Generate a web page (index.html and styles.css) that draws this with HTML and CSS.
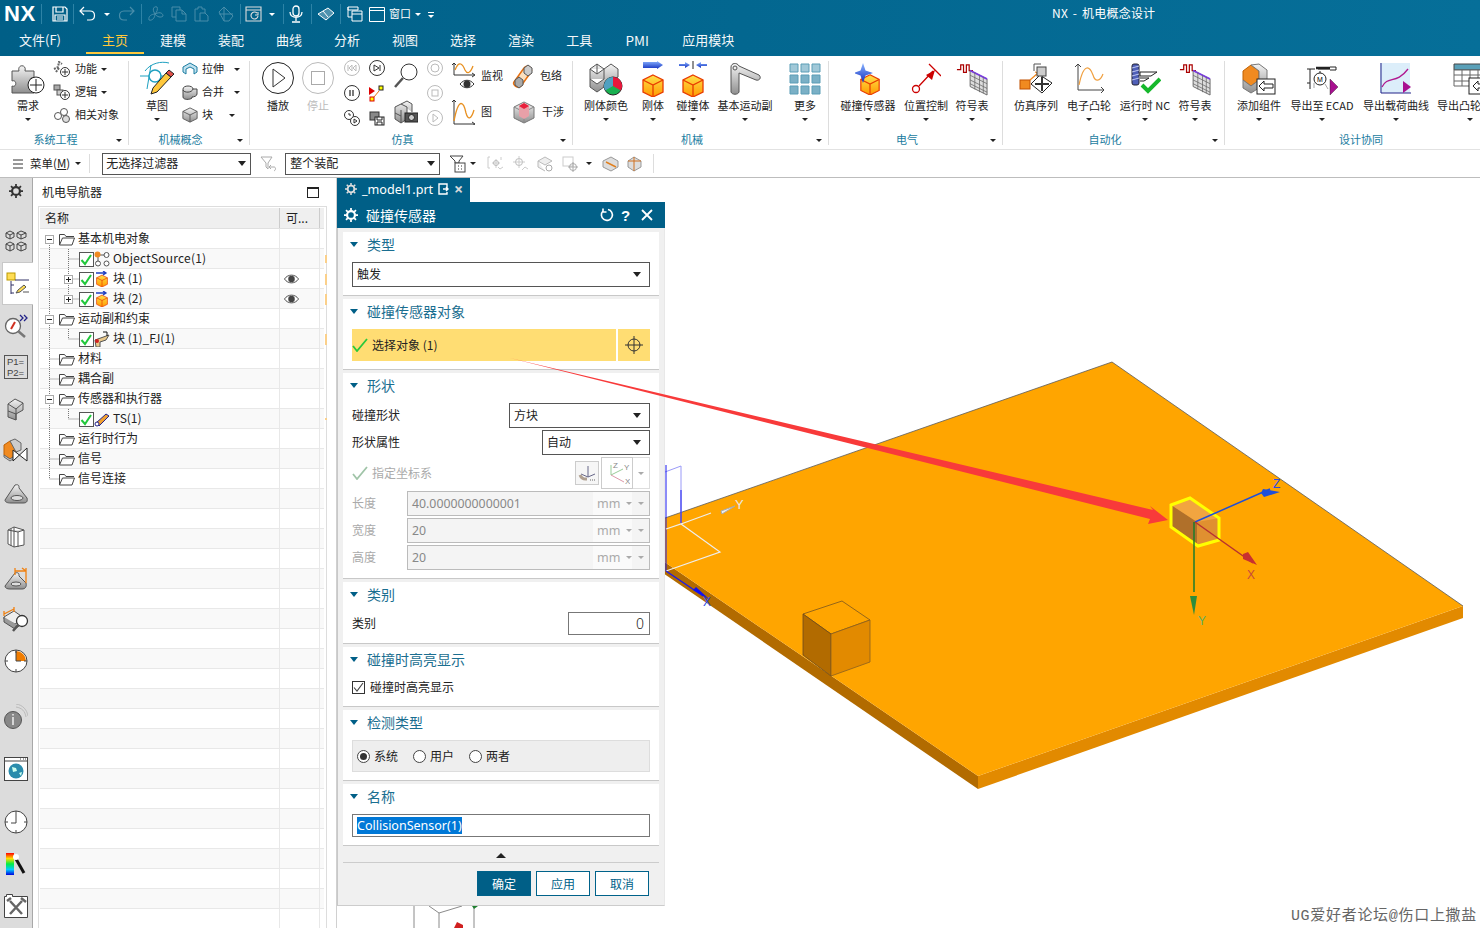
FILE: index.html
```html
<!DOCTYPE html>
<html lang="zh">
<head>
<meta charset="utf-8">
<title>NX - 机电概念设计</title>
<link rel="stylesheet" href="styles.css">
</head>
<body>
<svg class="defs" width="0" height="0" aria-hidden="true">
  <defs>
    <linearGradient id="sil" x1="0" y1="0" x2="0" y2="1"><stop offset="0" stop-color="#f4f4f4"/><stop offset="1" stop-color="#8f8f8f"/></linearGradient>
    <linearGradient id="gold" x1="0" y1="0" x2="0" y2="1"><stop offset="0" stop-color="#ffe04a"/><stop offset="1" stop-color="#ff9a00"/></linearGradient>
    <linearGradient id="blu" x1="0" y1="0" x2="0" y2="1"><stop offset="0" stop-color="#8ab4ff"/><stop offset="1" stop-color="#1230c0"/></linearGradient>
    <linearGradient id="rain" x1="0" y1="0" x2="0" y2="1"><stop offset="0" stop-color="#f00"/><stop offset=".25" stop-color="#fd0"/><stop offset=".5" stop-color="#0e4"/><stop offset=".75" stop-color="#0cf"/><stop offset="1" stop-color="#00d"/></linearGradient>
    <symbol id="folder" viewBox="0 0 16 14"><path d="M.5 13V2.500h5l1.500 2H15M.5 13h12.500l2.500-7H3.500L.5 13" fill="#fff" stroke="#444"/></symbol>
    <symbol id="chk" viewBox="0 0 15 15"><rect x=".5" y=".5" width="14" height="14" fill="#fff" stroke="#555"/><path d="M2.500 8l3.500 4 6-9" fill="none" stroke="#22c83c" stroke-width="2"/></symbol>
    <symbol id="cube" viewBox="0 0 22 24"><path d="M11 2l10 5v12l-10 5-10-5V7z" fill="url(#gold)" stroke="#e83c00" stroke-width="1.300"/><path d="M1 7l10 5 10-5M11 12v12" fill="none" stroke="#e83c00" stroke-width="1.300"/></symbol>
    <symbol id="silcube" viewBox="0 0 18 18"><path d="M9 1l8 4v8l-8 4-8-4V5z" fill="url(#sil)" stroke="#555"/><path d="M1 5l8 4 8-4M9 9v8" fill="none" stroke="#555"/></symbol>
    <symbol id="table" viewBox="0 0 34 34"><path d="M1 7h4V2h3v8h3V2h3v6h4" fill="none" stroke="#a00" stroke-width="1.300"/><path d="M15 8l18 9v17l-18-9z" fill="#ddd" stroke="#666"/><path d="M15 8l18 9" stroke="#7a3ce0" stroke-width="2"/><path d="M15 13l18 9M15 18l18 9M15 22l18 9M20 10v18M25 13v18M29 15v17" stroke="#666" stroke-width=".8"/></symbol>
    <symbol id="eye" viewBox="0 0 16 12"><path d="M.5 6C4 .5 12 .5 15.500 6 12 11.500 4 11.500.5 6z" fill="#fff" stroke="#444"/><circle cx="8" cy="6" r="3.500" fill="#444"/></symbol>
    <symbol id="gear" viewBox="0 0 16 16"><circle cx="8" cy="8" r="4.500" fill="none" stroke="currentColor" stroke-width="2.500"/><path d="M8 0v3M8 13v3M0 8h3M13 8h3M2.300 2.300l2 2M11.700 11.700l2 2M13.700 2.300l-2 2M4.300 11.700l-2 2" stroke="currentColor" stroke-width="2"/></symbol>
  </defs>
</svg>

<header class="topbar">
  <div class="quick">
    <strong class="logo">NX</strong><i class="qsep"></i>
    <svg class="q ml10" width="16" height="16" viewBox="0 0 16 16"><path d="M1 1h12l2 2v12H1zM4 1v5h7V1M3 15V9h10v6M5 11h6M5 13h6" fill="none" stroke="#fff" stroke-width="1.200"/></svg><i class="qsep ml5"></i>
    <svg class="q ml5" width="18" height="16" viewBox="0 0 18 16"><path d="M5 1L1 5l4 4M1 5h10c6 0 6 9 0 9H8" fill="none" stroke="#fff" stroke-width="1.200"/></svg><i class="caret w ml7"></i>
    <svg class="q dim ml7" width="18" height="16" viewBox="0 0 18 16"><path d="M13 1l4 4-4 4M17 5H7c-6 0-6 9 0 9h3" fill="none" stroke="#fff" stroke-width="1.200"/></svg><i class="qsep ml6"></i>
    <svg class="q dim ml5" width="17" height="16" viewBox="0 0 17 16"><path d="M8 8C4 2 8 0 10 1c1 2 0 5-2 7zm0 0c6-3 8 0 8 2-2 2-6 1-8-2zm0 0c-3 0-7 2-6 6 3 1 6-2 6-6z" fill="none" stroke="#fff"/></svg>
    <svg class="q dim ml7" width="16" height="16" viewBox="0 0 16 16"><path d="M1 1h8v3M1 1v10h4M5 4h6l4 4v7H5zM11 4v4h4" fill="none" stroke="#fff"/></svg>
    <svg class="q dim ml6" width="16" height="16" viewBox="0 0 16 16"><path d="M2 3h3V1h4v2h3v4M7 15H2V3M7 7h5l3 3v5H7z" fill="none" stroke="#fff"/></svg>
    <svg class="q dim ml7" width="18" height="16" viewBox="0 0 18 16"><path d="M3 6l5-5 9 9-4 5H8z M8 1v14M3 8l14 0" fill="none" stroke="#fff"/></svg><i class="qsep ml6"></i>
    <svg class="q warm ml4" width="17" height="16" viewBox="0 0 17 16"><path d="M1 1h15v14H1zM1 4h15M12 7a3.500 3.500 0 1 0 1 3M13 6v3h-3" fill="none" stroke="#ddd" stroke-width="1.100"/></svg><i class="caret w ml7"></i><i class="qsep ml8"></i>
    <svg class="q ml5" width="14" height="18" viewBox="0 0 14 18"><rect x="4" y="1" width="6" height="10" rx="3" fill="none" stroke="#fff" stroke-width="1.300"/><path d="M1 7c0 7 12 7 12 0M7 13v3M3 17h8" fill="none" stroke="#fff" stroke-width="1.300"/></svg><i class="qsep ml8"></i>
    <svg class="q ml5" width="18" height="14" viewBox="0 0 18 14"><path d="M1 7l10-6 6 5-8 7zM6 4l5 6" fill="#fff" fill-opacity=".3" stroke="#fff"/></svg><i class="qsep ml5"></i>
    <svg class="q ml6" width="16" height="16" viewBox="0 0 16 16"><path d="M1 1h10v3H1zM1 1v10h4M5 5h10v10H5zM5 8h10" fill="none" stroke="#fff"/></svg>
    <svg class="q ml6" width="16" height="15" viewBox="0 0 16 15"><path d="M.5.500h15v14H.5zM.5 3.500h15" fill="none" stroke="#fff"/></svg>
    <span class="qtext ml4">窗口</span><i class="caret w ml4"></i><i class="qmenu ml7"></i>
    <span class="apptitle">NX - 机电概念设计</span>
  </div>
  <nav class="tabs">
    <a class="tab file">文件(F)</a><a class="tab on">主页</a><a class="tab">建模</a><a class="tab">装配</a><a class="tab">曲线</a><a class="tab">分析</a><a class="tab">视图</a><a class="tab">选择</a><a class="tab">渲染</a><a class="tab">工具</a><a class="tab pmi">PMI</a><a class="tab">应用模块</a>
  </nav>
</header>

<section class="ribbon">
  <div class="group g1">
    <div class="items">
      <div class="big"><svg width="34" height="36" viewBox="0 0 34 36"><path d="M1 10h7C6 3 16 3 14 10h9v7c-6-2-6 8 0 6v9H1v-7c5 2 5-7 0-5z" fill="url(#sil)" stroke="#555"/><circle cx="25" cy="24" r="8" fill="#fff" stroke="#222"/><path d="M25 18v12M19 24h12" stroke="#222"/></svg><span>需求</span><i class="caret"></i></div>
      <div class="col">
        <div class="sm"><svg width="18" height="16" viewBox="0 0 18 16"><path d="M1 8l4-2 1-5 3 2M3 11l3-4" stroke="#666" fill="none" stroke-width="2" stroke-dasharray="2 1"/><circle cx="12" cy="11" r="4.500" fill="#fff" stroke="#333"/><path d="M12 8v6M9 11h6" stroke="#333"/></svg><span>功能</span><i class="caret"></i></div>
        <div class="sm"><svg width="18" height="16" viewBox="0 0 18 16"><rect x="1" y="1" width="6" height="5" fill="#aaa" stroke="#555"/><rect x="4" y="6" width="6" height="5" fill="#ccc" stroke="#555"/><circle cx="12" cy="11" r="4.500" fill="#fff" stroke="#333"/><path d="M12 8v6M9 11h6" stroke="#333"/></svg><span>逻辑</span><i class="caret"></i></div>
        <div class="sm"><svg width="18" height="16" viewBox="0 0 18 16"><circle cx="5" cy="9" r="3.500" fill="#fff" stroke="#555"/><circle cx="11" cy="5" r="3.500" fill="#fff" stroke="#555"/><circle cx="13" cy="12" r="3.500" fill="#ddd" stroke="#555"/></svg><span>相关对象</span></div>
      </div>
    </div>
    <div class="glabel"><span>系统工程</span><i class="caret"></i></div>
  </div>

  <div class="group g2">
    <div class="items">
      <div class="big"><svg width="36" height="36" viewBox="0 0 36 36"><path d="M1 15h24M8 28L12 4M6 10C12 2 22 0 30 2" fill="none" stroke="#1ea0c0"/><circle cx="16" cy="15" r="6" fill="#fff" stroke="#1ea0c0" stroke-width="1.500"/><path d="M12 33l2-6L27 12l5 4L18 31z" fill="#ffc83c" stroke="#222"/><path d="M27 12l3-3 5 4-3 3z" fill="#e0504a" stroke="#222"/></svg><span>草图</span><i class="caret"></i></div>
      <div class="col">
        <div class="sm"><svg width="16" height="14" viewBox="0 0 16 14"><path d="M1 5l7-4 7 4v5l-3 2V7L8 5 4 7v5l-3-2z" fill="#bfe2f0" stroke="#1c7ca0"/></svg><span>拉伸</span><i class="caret sp"></i></div>
        <div class="sm"><svg width="16" height="15" viewBox="0 0 16 15"><path d="M1 4c0-4 10-4 10 0h4v5c0 2-3 3-5 3v1c-2 2-9 2-9-1z" fill="url(#sil)" stroke="#444"/><path d="M1 5c1 3 9 3 10-1" fill="none" stroke="#444"/></svg><span>合并</span><i class="caret sp"></i></div>
        <div class="sm"><svg width="16" height="16"><use href="#silcube"/></svg><span>块</span><i class="caret sp2"></i></div>
      </div>
    </div>
    <div class="glabel"><span>机械概念</span><i class="caret"></i></div>
  </div>

  <div class="group g3">
    <div class="items">
      <div class="big"><svg width="32" height="36" viewBox="0 0 32 36"><circle cx="16" cy="17" r="15.500" fill="#fff" stroke="#222"/><path d="M11 8l12 9-12 9z" fill="#fff" stroke="#333"/></svg><span>播放</span></div>
      <div class="big off"><svg width="32" height="36" viewBox="0 0 32 36"><circle cx="16" cy="17" r="15.500" fill="#fff" stroke="#bbb"/><rect x="9.500" y="10.500" width="13" height="13" fill="none" stroke="#aaa"/></svg><span>停止</span></div>
      <div class="col">
        <svg width="16" height="16" viewBox="0 0 16 16"><circle cx="8" cy="8" r="7.500" fill="#fff" stroke="#bbb"/><path d="M4 5v6M8 5L5 8l3 3zM12 5L9 8l3 3z" fill="none" stroke="#bbb"/></svg>
        <svg width="16" height="16" viewBox="0 0 16 16"><circle cx="8" cy="8" r="7.500" fill="#fff" stroke="#333"/><path d="M6 5v6M9 5v6" stroke="#333" stroke-width="1.300"/></svg>
        <svg width="16" height="16" viewBox="0 0 16 16"><circle cx="5" cy="5" r="4.500" fill="#fff" stroke="#333"/><circle cx="11" cy="11" r="4.500" fill="#fff" stroke="#333"/><path d="M5 3v2h2M10 9l3 2-3 2z" fill="none" stroke="#333"/></svg>
      </div>
      <div class="col">
        <svg width="16" height="16" viewBox="0 0 16 16"><circle cx="8" cy="8" r="7.500" fill="#fff" stroke="#333"/><path d="M5 5l5 3-5 3zM11 5v6" fill="none" stroke="#333"/></svg>
        <svg width="16" height="17" viewBox="0 0 16 17"><path d="M0 2l6 4-6 4z" fill="#d00"/><rect x="10" y="1" width="4" height="4" fill="#ff0" stroke="#222"/><rect x="1" y="12" width="4" height="4" fill="#ff0" stroke="#d00"/><path d="M5 12l5-6" stroke="#e87010"/></svg>
        <svg width="16" height="16" viewBox="0 0 16 16"><rect x="1" y="2" width="9" height="8" fill="#888" stroke="#333"/><rect x="6" y="7" width="9" height="8" fill="#fff" stroke="#222"/><path d="M8 7v3h5V7M8 15v-3h5v3" fill="none" stroke="#222"/></svg>
      </div>
      <div class="col wide">
        <svg width="24" height="26" viewBox="0 0 24 26"><circle cx="15" cy="9" r="8" fill="#fff" stroke="#333"/><path d="M9 15L1 24" stroke="#555" stroke-width="2.500"/></svg>
        <svg width="24" height="26" viewBox="0 0 24 26"><path d="M1 8l6-3 6 3v12l-6 4-6-4zM7 5l6-3 5 3v8M1 14l6 3M7 24V11" fill="url(#sil)" stroke="#555"/><rect x="11" y="14" width="13" height="9" fill="#555" stroke="#222"/><circle cx="17.500" cy="18.500" r="3" fill="#ccc" stroke="#222"/></svg>
      </div>
      <div class="col">
        <svg width="16" height="16" viewBox="0 0 16 16"><circle cx="8" cy="8" r="7.500" fill="#fff" stroke="#bbb"/><circle cx="8" cy="8" r="4" fill="none" stroke="#bbb"/></svg>
        <svg width="16" height="16" viewBox="0 0 16 16"><circle cx="8" cy="8" r="7.500" fill="#fff" stroke="#bbb"/><rect x="5" y="5" width="6" height="6" fill="none" stroke="#bbb"/></svg>
        <svg width="16" height="16" viewBox="0 0 16 16"><circle cx="8" cy="8" r="7.500" fill="#fff" stroke="#bbb"/><path d="M6 4l5 4-5 4z" fill="none" stroke="#bbb"/></svg>
      </div>
      <div class="col2">
        <div class="sm2"><svg width="24" height="28" viewBox="0 0 24 28"><path d="M2 13V1M0 3l2-2 2 2M2 13h20M20 11l3 2-3 2" fill="none" stroke="#333"/><path d="M3 8c4-11 8-5 10 0 2 4 5 4 8-4" fill="none" stroke="#e89020" stroke-width="1.300"/><path d="M8 22c4-5 10-5 14 0-4 5-10 5-14 0z" fill="#fff" stroke="#333"/><circle cx="15" cy="22" r="3.500" fill="#333"/></svg><span>监视</span></div>
        <div class="sm2"><svg width="24" height="26" viewBox="0 0 24 26"><path d="M2 25V1M0 3l2-2 2 2M2 25h20M20 23l3 2-3 2" fill="none" stroke="#333"/><path d="M2 22C7-4 12 4 14 14c2 7 5 7 8-3" fill="none" stroke="#e89020" stroke-width="1.300"/></svg><span>图</span></div>
      </div>
      <div class="col2">
        <div class="sm2"><svg width="22" height="26" viewBox="0 0 22 26"><path d="M2 19L12 5c3-4 9 0 7 4L9 23c-3 3-9-1-7-4z" fill="#fbe0c0" stroke="#e87010" stroke-width="1.500"/><path d="M3 17l4-3 4 3v5l-4 3-4-3z" fill="#aaa" stroke="#555"/><path d="M12 5l4-3 4 3v5l-4 3-4-3z" fill="#ccc" stroke="#555"/></svg><span>包络</span></div>
        <div class="sm2"><svg width="24" height="24" viewBox="0 0 24 24"><path d="M2 7l10-5 10 5v11l-10 5-10-5z" fill="url(#sil)" stroke="#777"/><path d="M2 7l10 5 10-5M12 12v11" fill="none" stroke="#888"/><path d="M7 6l5-3 5 3v10l-5 3-5-3z" fill="#e8a0a8"/><path d="M7 6l5-3 5 3-5 3z" fill="#e8203c"/></svg><span>干涉</span></div>
      </div>
    </div>
    <div class="glabel"><span>仿真</span><i class="caret"></i></div>
  </div>

  <div class="group g4">
    <div class="items">
      <div class="big"><svg width="34" height="36" viewBox="0 0 34 36"><path d="M1 8l7-5 7 5 7-5 7 5v8l-7 5-7 5-7 5-7-5zM8 13V3M15 18V8M1 8l7 5 7-5M1 18l7 5 7-5" fill="url(#sil)" stroke="#555"/><circle cx="24" cy="25" r="9" fill="#18b050" stroke="#222"/><path d="M24 25v-9a9 9 0 0 1 7.800 13.500z" fill="#e8183c"/><path d="M24 25v-9a9 9 0 0 0-7.800 13.500z" fill="#50a0c0"/></svg><span>刚体颜色</span><i class="caret"></i></div>
      <div class="big"><svg width="22" height="36" viewBox="0 0 22 36"><path d="M1 1h14V0l6 4-6 4V7H1z" fill="url(#blu)"/><use href="#cube" y="12" width="22" height="24"/></svg><span>刚体</span><i class="caret"></i></div>
      <div class="big"><svg width="28" height="36" viewBox="0 0 28 36"><path d="M0 3h6V1l5 3-5 3V5H0zM28 3h-6V1l-5 3 5 3V5h6z" fill="url(#blu)"/><path d="M14 0v8" stroke="#222"/><use href="#cube" x="3" y="12" width="22" height="24"/></svg><span>碰撞体</span><i class="caret"></i></div>
      <div class="big"><svg width="32" height="32" viewBox="0 0 32 32"><path d="M2 4c0-4 6-5 8-1l20 9c3 3 0 6-3 5L10 10v19c-1 3-7 3-8 0z" fill="url(#sil)" stroke="#555"/><circle cx="6" cy="5" r="2" fill="#eee" stroke="#555"/></svg><span>基本运动副</span><i class="caret"></i></div>
      <div class="big"><svg class="more" width="32" height="32" viewBox="0 0 32 32"><path d="M1 1h8v8H1zM12 1h8v8h-8zM23 1h8v8h-8z" fill="#a0c8d8" stroke="#5b9db6"/><path d="M1 12h8v8H1zM12 12h8v8h-8zM23 12h8v8h-8zM1 23h8v8H1zM12 23h8v8h-8zM23 23h8v8h-8z" fill="#7ab0c6" stroke="#5b9db6"/></svg><span>更多</span><i class="caret"></i></div>
    </div>
    <div class="glabel"><span class="teal">机械</span><i class="caret"></i></div>
  </div>

  <div class="group g5">
    <div class="items">
      <div class="big"><svg width="26" height="32" viewBox="0 0 26 32"><use href="#cube" x="4" y="10" width="22" height="22"/><path d="M8 0l2.500 7.500L18 10l-7.500 2.500L8 20l-2.500-7.500L-1 10l6.500-2.500z" fill="url(#blu)"/></svg><span>碰撞传感器</span><i class="caret"></i></div>
      <div class="big"><svg width="30" height="32" viewBox="0 0 30 32"><circle cx="5" cy="26" r="3.500" fill="#fff" stroke="#c00" stroke-width="1.300"/><path d="M8 23L22 8M18 1l12 12" stroke="#c00" stroke-width="1.300"/><path d="M24 7l-3 10-6-5z" fill="#c00"/></svg><span>位置控制</span><i class="caret"></i></div>
      <div class="big"><svg width="32" height="32"><use href="#table"/></svg><span>符号表</span><i class="caret"></i></div>
    </div>
    <div class="glabel"><span class="teal">电气</span><i class="caret"></i></div>
  </div>

  <div class="group g6">
    <div class="items">
      <div class="big"><svg width="34" height="32" viewBox="0 0 34 32"><rect x="1" y="17" width="10" height="9" fill="#f08a20" stroke="#c05000"/><path d="M11 17l8-7M16 9l3 1v3" fill="none" stroke="#f08a20" stroke-width="1.300"/><path d="M21 12l12 8-10 10-11-9z" fill="#fff" stroke="#222"/><path d="M23 14v14M16 21h14" stroke="#333" stroke-width="2"/><rect x="18" y="4" width="9" height="9" fill="#ccc" stroke="#444"/><path d="M15 8V1h7" fill="none" stroke="#555"/></svg><span>仿真序列</span></div>
      <div class="big"><svg width="32" height="32" viewBox="0 0 32 32"><path d="M5 27V1M2 4l3-3 3 3M5 27h26M28 24l3 3-3 3" fill="none" stroke="#444"/><path d="M6 22C11-2 17 4 20 12c2 7 7 7 10-1" fill="none" stroke="#f0a040" stroke-width="1.200"/></svg><span>电子凸轮</span><i class="caret"></i></div>
      <div class="big"><svg width="32" height="32" viewBox="0 0 32 32"><rect x="3" y="1" width="7" height="21" rx="2" fill="#5060b8" stroke="#223"/><path d="M3 5l7-2M3 9l7-2M3 13l7-2M3 17l7-2" stroke="#c0c8f0"/><path d="M11 9h17l-6 4H11zM11 15h9l-5 3h-4" fill="#fff" stroke="#222"/><path d="M13 22l6 6 12-12" fill="none" stroke="#16b82c" stroke-width="4"/></svg><span>运行时 NC</span><i class="caret"></i></div>
      <div class="big"><svg width="32" height="32"><use href="#table"/></svg><span>符号表</span><i class="caret"></i></div>
    </div>
    <div class="glabel"><span class="teal">自动化</span><i class="caret"></i></div>
  </div>

  <div class="group g7">
    <div class="items">
      <div class="big"><svg width="34" height="32" viewBox="0 0 34 32"><path d="M1 8l8-6 8 6v9l-8 6-8-6z" fill="#f08a20" stroke="#c06000"/><path d="M9 2l8-1 8 6v10l-8 0V8zM1 17l8 6 8-6v8l-8 5-8-5z" fill="url(#sil)" stroke="#777"/><rect x="15" y="16" width="18" height="15" fill="#fff" stroke="#222"/><path d="M31 21h-9v-3l-5 5 5 5v-3h9z" fill="#fff" stroke="#222"/></svg><span>添加组件</span><i class="caret"></i></div>
      <div class="big"><svg width="32" height="32" viewBox="0 0 32 32"><path d="M1 6h8M12 6h12M24 4h6v3h-6" fill="none" stroke="#222"/><path d="M10 5h14" stroke="#222" stroke-width="2.500"/><path d="M4 6v20M4 20H1M14 8v2" stroke="#222"/><circle cx="14" cy="16" r="6" fill="#fff" stroke="#222"/><text x="14" y="19" class="mini">M</text><path d="M8 20v5M19 21l3 5M24 16l8 8-8 8z" fill="#a81090" stroke="#222" stroke-width=".4"/></svg><span>导出至 ECAD</span><i class="caret"></i></div>
      <div class="big"><svg width="32" height="32" viewBox="0 0 32 32"><rect width="30" height="30" fill="#dceefa"/><path d="M1 0v30h30" fill="none" stroke="#228"/><path d="M2 24c6-12 14-2 26-18" fill="none" stroke="#b01890" stroke-width="1.300"/><path d="M23 18l8 6-8 6z" fill="#a81090"/></svg><span>导出载荷曲线</span><i class="caret"></i></div>
      <div class="big edge"><svg width="34" height="32" viewBox="0 0 34 32"><path d="M1 1h32v6H1z" fill="#5aa0b8" stroke="#444"/><path d="M1 7h32v16H1zM1 12h32M1 18h32M9 7v16M17 7v16M25 7v16" fill="#fff" stroke="#666"/><rect x="16" y="15" width="18" height="16" fill="#fff" stroke="#222"/><path d="M34 21h-9v-3l-5 5 5 5v-3h9" fill="#fff" stroke="#222"/></svg><span>导出凸轮</span><i class="caret"></i></div>
    </div>
    <div class="glabel"><span class="teal">设计协同</span></div>
  </div>
</section>

<section class="selbar">
  <svg class="ham" width="10" height="10" viewBox="0 0 10 10"><path d="M0 1h10M0 5h10M0 9h10" stroke="#333"/></svg>
  <span class="menu">菜单(<u>M</u>)</span><i class="caret"></i><i class="bsep"></i>
  <div class="combo c1"><span>无选择过滤器</span><i class="tri"></i></div>
  <svg class="filter" width="17" height="16" viewBox="0 0 17 16"><path d="M1 1h11L8 7v6l-2-2V7zM11 9l-2 2 2 2M9 11h5c2 0 2 3 0 4" fill="none" stroke="#aaa"/></svg>
  <div class="combo c2"><span>整个装配</span><i class="tri"></i></div>
  <svg class="tool" width="17" height="18" viewBox="0 0 17 18"><path d="M1 1h13l-4 5v2H6V6z" fill="#fff" stroke="#444"/><rect x="6" y="8" width="10" height="9" fill="#fff" stroke="#444"/><path d="M9 11h1M12 11h1M9 14h1M12 14h1" stroke="#333"/></svg><i class="caret"></i>
  <svg class="tool t2" width="17" height="16" viewBox="0 0 17 16"><path d="M3 1H1v11h2M9 3v9M5 7h8M14 1v3M11 11l2 2 3-2" fill="none" stroke="#ccc"/><circle cx="9" cy="7" r="2.500" fill="none" stroke="#bbb"/></svg>
  <svg class="tool t3" width="17" height="16" viewBox="0 0 17 16"><circle cx="7" cy="6" r="3.500" fill="none" stroke="#bbb"/><path d="M7 0v12M1 6h12M10 14l3-3 3 2" fill="none" stroke="#ccc"/></svg>
  <svg class="tool t3" width="17" height="16" viewBox="0 0 17 16"><path d="M1 5l7-4 7 4-7 4zM1 5v6l7 4" fill="#eee" stroke="#bbb"/><circle cx="12" cy="12" r="3" fill="#fff" stroke="#aaa"/></svg>
  <svg class="tool t3" width="17" height="16" viewBox="0 0 17 16"><rect x="1" y="1" width="10" height="9" fill="#fff" stroke="#ccc"/><circle cx="11" cy="11" r="3.500" fill="none" stroke="#aaa"/><path d="M11 6v10M6 11h10" stroke="#aaa"/></svg><i class="caret c7"></i>
  <svg class="tool t6" width="17" height="16" viewBox="0 0 17 16"><path d="M1 5l8-4 7 4v6l-7 4-8-4z" fill="#ddd" stroke="#999"/><path d="M4 6l10 5" stroke="#e08020" stroke-width="1.500"/></svg>
  <svg class="tool t3" width="15" height="16" viewBox="0 0 15 16"><path d="M1 5l6-4 7 4v6l-7 4-6-4z" fill="#ddd" stroke="#999"/><path d="M7 1v14M1 5l13 0" stroke="#d07020"/></svg><i class="bsep last"></i>
</section>

<main class="main">
  <aside class="rail">
    <div class="ri top"><svg width="14" height="14" class="dk"><use href="#gear"/></svg></div>
    <div class="ri s1"><svg width="22" height="22" viewBox="0 0 22 22"><g fill="#ddd" stroke="#444"><path d="M1 3l4-2 4 2v4l-4 2-4-2zM12 3l4-2 5 2v4l-5 2-4-2zM1 14l4-2 4 2v5l-4 2-4-2zM12 14l4-2 5 2v5l-5 2-4-2z"/><path d="M1 3l4 2 4-2M5 5v4M12 3l4 2 5-2M16 5v4M1 14l4 2 4-2M5 16v5M12 14l4 2 5-2M16 16v5" fill="none"/></g></svg></div>
    <div class="ri act"><svg width="24" height="24" viewBox="0 0 24 24"><rect x="1" y="1" width="8" height="7" fill="#fd5" stroke="#b90"/><path d="M9 8h14M5 9v13M5 13h3M5 21h3" stroke="#336" fill="none"/><path d="M10 21l2-3 6-5 2 2-6 5z" fill="#fd5" stroke="#555"/><path d="M17 20h6" stroke="#555"/></svg></div>
    <div class="ri h41"><svg width="24" height="24" viewBox="0 0 24 24"><circle cx="9" cy="12" r="7.500" fill="#fff" stroke="#666" stroke-width="1.300"/><path d="M7 15l4-7" stroke="#d03020" stroke-width="2"/><path d="M14 17l7 6" stroke="#777" stroke-width="2.500"/><path d="M16 1l3 3-3 3M20 1l3 3-3 3" fill="none" stroke="#228" stroke-width="1.300"/></svg></div>
    <div class="ri"><div class="pbox">P1=<br>P2=</div></div>
    <div class="ri h41"><svg width="20" height="24" viewBox="0 0 20 24"><path d="M2 7l7-5 8 4v7l-7 4v6l-8-3z" fill="url(#sil)" stroke="#555"/><path d="M2 7l8 5 7-6M10 12v11M2 14l8 3" fill="none" stroke="#555"/></svg></div>
    <div class="ri h44"><svg width="26" height="26" viewBox="0 0 26 26"><path d="M1 7l6-4 6 4v10l-6 4-6-4z" fill="#f08a20" stroke="#c06000"/><path d="M7 3l5-2 6 4v7l-5 2zM1 17l6 4 6-4v2l-6 4-6-4z" fill="#ccc" stroke="#666"/><path d="M10 12l14 11V10L10 23z" fill="#fff" stroke="#222"/></svg></div>
    <div class="ri"><svg width="26" height="24" viewBox="0 0 26 24"><path d="M2 18L12 3c4-1 4 1 4 3l8 10c1 4-1 5-4 5H8c-4 0-6-1-6-3z" fill="url(#sil)" stroke="#555"/><ellipse cx="14" cy="16" rx="6" ry="2.500" fill="#ddd" stroke="#555"/></svg></div>
    <div class="ri h41"><svg width="20" height="24" viewBox="0 0 20 24"><path d="M2 6l6-3 10 3v15l-10 2-6-3zM8 3v20M5 5v17M2 6l10 2 6-2M12 8v15" fill="#fff" stroke="#555"/></svg></div>
    <div class="ri h43"><svg width="26" height="24" viewBox="0 0 26 24"><path d="M2 20L12 7c4-1 4 1 4 3l7 7c1 4-1 6-4 6H7c-3 0-5-1-5-3z" fill="url(#sil)" stroke="#555"/><ellipse cx="13" cy="18" rx="5" ry="2" fill="#ddd" stroke="#555"/><path d="M12 2v7M12 5h11M23 2v15M19 2l4 3" fill="none" stroke="#f08010" stroke-width="1.300"/></svg></div>
    <div class="ri"><svg width="26" height="26" viewBox="0 0 26 26"><path d="M1 10l10-6 10 7-9 6-11-5z" fill="#eee" stroke="#555"/><path d="M1 10v5l11 7 4-3" fill="#999" stroke="#555"/><path d="M1 7l10-5M1 4v5M11 0v5" stroke="#f08010" stroke-width="1.300"/><circle cx="19" cy="14" r="5.500" fill="#fff" stroke="#333" stroke-width="1.300"/><path d="M15 18l-5 6" stroke="#555" stroke-width="2.500"/></svg></div>
    <div class="ri h40"><svg width="24" height="24" viewBox="0 0 24 24"><circle cx="12" cy="12" r="11" fill="#fff" stroke="#444"/><path d="M12 12V2a10 10 0 0 1 10 10z" fill="#f07c00"/><path d="M12 1v3M12 20v3M1 12h3M20 12h3M12 2v10h5" fill="none" stroke="#444"/></svg></div>
    <div class="ri g15"><svg width="24" height="26" viewBox="0 0 24 26"><circle cx="9" cy="16" r="8.500" fill="#888" stroke="#555"/><path d="M9 13v8M9 10v1.500" stroke="#fff" stroke-width="1.300"/><path d="M12 3c6 1 9 4 10 10M12 0c7 1 11 6 12 12" fill="none" stroke="#bbb"/></svg></div>
    <div class="ri g10"><svg width="24" height="24" viewBox="0 0 24 24"><rect x=".5" y=".5" width="23" height="23" fill="#fff" stroke="#444"/><path d="M1 4h22M16 2h1M19 2h1M21 2h1" stroke="#444"/><circle cx="12" cy="14" r="7.500" fill="#2a8cac"/><path d="M8 10l4 1 1 3-4 1zM15 16l3-1-1 4z" fill="#cfe"/></svg></div>
    <div class="ri g11"><svg width="24" height="24" viewBox="0 0 24 24"><circle cx="12" cy="12" r="11" fill="#fff" stroke="#444"/><path d="M12 1v3M12 20v3M1 12h3M20 12h3M12 4v9H7" fill="none" stroke="#444"/></svg></div>
    <div class="ri"><svg width="24" height="24" viewBox="0 0 24 24"><rect x="2" y="1" width="8" height="22" fill="url(#rain)"/><path d="M12 7l8 14" stroke="#111" stroke-width="3"/><circle cx="12" cy="5" r="3" fill="#fff"/></svg></div>
    <div class="ri"><svg width="24" height="24" viewBox="0 0 24 24"><path d="M.5 23.500V2.500h2v-2h6v2h15v21z" fill="#fff" stroke="#444"/><path d="M6 7l12 13M18 7L6 20M3 7l4-3M17 4l5 4" stroke="#666" stroke-width="2.500" fill="none"/></svg></div>
  </aside>

  <aside class="navpanel">
    <div class="navhead"><span>机电导航器</span><i class="maxbox"></i></div>
    <div class="frame">
      <div class="thead"><span class="th1">名称</span><span class="th2">可...</span><span class="th3"></span></div>
      <div class="tree">
        <svg class="lines" width="100" height="260" viewBox="0 0 100 260"><path d="M9.500 16v234M9.500 250h11M9.500 130h11M9.500 150h11M9.500 230h11M28.500 20v50M28.500 30h11M28.500 50h11M28.500 70h11M28.500 100v10h11M28.500 180v10h11" fill="none" stroke="#777" stroke-dasharray="1 1"/></svg>
        <div class="row"><div class="cell"><i class="exp minus"></i><svg class="fo" width="16" height="14"><use href="#folder"/></svg><span>基本机电对象</span></div></div>
        <div class="row"><div class="cell l2"><svg width="15" height="15"><use href="#chk"/></svg><svg class="oi" width="16" height="16" viewBox="0 0 16 16"><path d="M4 4l8 0M4 4l0 8" stroke="#555"/><circle cx="3.500" cy="3.500" r="3" fill="#f08a20"/><circle cx="12.500" cy="4" r="2.500" fill="#fff" stroke="#555"/><circle cx="4" cy="12.500" r="2.500" fill="#fff" stroke="#555"/><circle cx="12.500" cy="12.500" r="2.500" fill="#fff" stroke="#555"/></svg><span class="lat">ObjectSource(1)</span></div><div class="c2"></div><div class="c3"><i class="tick t"></i></div></div>
        <div class="row"><div class="cell l2p"><i class="exp plus"></i><svg width="15" height="15"><use href="#chk"/></svg><svg class="oi" width="16" height="16" viewBox="0 0 16 16"><use href="#cube" x="2" y="3" width="12" height="13"/><path d="M2 2h9M9 0l3 2-3 2" fill="none" stroke="#2040c0" stroke-width="1.300"/></svg><span>块 (1)</span></div><div class="c2"><svg width="15" height="12"><use href="#eye"/></svg></div><div class="c3"><i class="tick"></i></div></div>
        <div class="row"><div class="cell l2p"><i class="exp plus"></i><svg width="15" height="15"><use href="#chk"/></svg><svg class="oi" width="16" height="16" viewBox="0 0 16 16"><use href="#cube" x="2" y="3" width="12" height="13"/><path d="M2 2h9M9 0l3 2-3 2" fill="none" stroke="#2040c0" stroke-width="1.300"/></svg><span>块 (2)</span></div><div class="c2"><svg width="15" height="12"><use href="#eye"/></svg></div><div class="c3"><i class="tick"></i></div></div>
        <div class="row"><div class="cell"><i class="exp minus"></i><svg class="fo" width="16" height="14"><use href="#folder"/></svg><span>运动副和约束</span></div></div>
        <div class="row"><div class="cell l2"><svg width="15" height="15"><use href="#chk"/></svg><svg class="oi" width="16" height="16" viewBox="0 0 16 16"><path d="M1 9l14-5-3 5-6 2v5H2z" fill="#e8c88a" stroke="#555"/><circle cx="3" cy="10" r="2" fill="#d02020"/><path d="M9 1h4v4" fill="none" stroke="#111"/></svg><span>块 (1)_FJ(1)</span></div><div class="c2"></div><div class="c3"><i class="tick"></i></div></div>
        <div class="row"><div class="cell noexp"><svg class="fo" width="16" height="14"><use href="#folder"/></svg><span>材料</span></div></div>
        <div class="row"><div class="cell noexp"><svg class="fo" width="16" height="14"><use href="#folder"/></svg><span>耦合副</span></div></div>
        <div class="row"><div class="cell"><i class="exp minus"></i><svg class="fo" width="16" height="14"><use href="#folder"/></svg><span>传感器和执行器</span></div></div>
        <div class="row"><div class="cell l2"><svg width="15" height="15"><use href="#chk"/></svg><svg class="oi" width="16" height="16" viewBox="0 0 16 16"><path d="M2 12L12 3l3 2-10 10z" fill="#f0a030" stroke="#228"/><circle cx="3" cy="13" r="2" fill="#fff" stroke="#228"/></svg><span>TS(1)</span></div><div class="c2"></div><div class="c3"><i class="tick d"></i></div></div>
        <div class="row"><div class="cell noexp"><svg class="fo" width="16" height="14"><use href="#folder"/></svg><span>运行时行为</span></div></div>
        <div class="row"><div class="cell noexp"><svg class="fo" width="16" height="14"><use href="#folder"/></svg><span>信号</span></div></div>
        <div class="row"><div class="cell noexp"><svg class="fo" width="16" height="14"><use href="#folder"/></svg><span>信号连接</span></div></div>
      </div>
    </div>
  </aside>

  <div class="work">
    <div class="doctabs">
      <div class="doctab">
        <svg class="gr" width="12" height="14"><use href="#gear"/></svg>
        <span>_model1.prt</span>
        <svg width="11" height="12" viewBox="0 0 11 12"><path d="M9 5V1H1v10h8V9M5 6h5M8 4l2 2-2 2" fill="none" stroke="#fff" stroke-width="1.400"/></svg>
        <b class="dclose">×</b>
      </div>
    </div>
    <div class="canvas">
      <svg class="model" width="1143" height="726" viewBox="337 202 1143 726">
        <g stroke="#8a8a8a" fill="none"><path d="M414 906v22M474 906v22M439 913v15M439 913l-10-7M439 913l23-7"/></g>
        <path d="M454 928l3-6 6 3v3z" fill="#d02020"/><path d="M472 906h6l-4 3z" fill="#208030"/>
        <polygon points="622,533 622,545 978,789 978,776" fill="#b26b00"/>
        <polygon points="978,776 978,789 1463,618 1463,606" fill="#e28a00"/>
        <polygon points="1112,362 1463,606 978,776 622,533" fill="#ffa500"/>
        <path d="M622 533L1112 362L1463 606" fill="none" stroke="#5a5a5a" stroke-width=".8"/>
        <path d="M665 472l16-6v57" fill="none" stroke="#9a9af8"/><path d="M681 490v33M666 465v106" fill="none" stroke="#1818f0"/>
        <path d="M666 529l15-5 39 28-54 19M681 524l30-11" fill="none" stroke="#eee" stroke-width="1.200"/>
        <path d="M721 511l14-5-13 8z" fill="#eee" stroke="#aaa"/>
        <text x="735" y="509" class="ax gry">Y</text>
        <path d="M666 571l37 25" stroke="#1818f0" stroke-width="1.300"/><path d="M693 590l3-3 14 13z" fill="#1010f0"/>
        <text x="703" y="606" class="ax blu">X</text>
        <polygon points="803,614 842,601 870,620 831,634" fill="#ffa500" stroke="#7a5520" stroke-width=".8"/>
        <polygon points="803,614 831,634 831,676 803,655" fill="#b26b00" stroke="#6a4a20" stroke-width=".8"/>
        <polygon points="831,634 870,620 870,662 831,676" fill="#e28a00" stroke="#8a6020" stroke-width=".8"/>
        <polygon points="1171,505 1190,498 1219,518 1195,527" fill="#f2a540"/>
        <polygon points="1171,505 1197,522 1197,545 1171,527" fill="#b0702a"/>
        <polygon points="1197,522 1219,518 1219,540 1197,546" fill="#e09030"/>
        <path d="M1171 505l19-7 29 20v22l-21 6-27-19z" fill="none" stroke="#ffff00" stroke-width="3"/>
        <path d="M1195 522l75-33" stroke="#1f4fd8" stroke-width="1.500"/><path d="M1263 489l17 3-16 5-3-4z" fill="#1f4fd8"/>
        <path d="M1195 522l58 41" stroke="#b83030" stroke-width="1.500"/><path d="M1243 554l5-2 9 13-14-6z" fill="#c83030"/>
        <path d="M1194 522v70" stroke="#1c7c2c" stroke-width="1.500"/><path d="M1190 596h7l-3 19z" fill="#2c8c3c"/>
        <text x="1273" y="488" class="ax blu">Z</text><text x="1247" y="579" class="ax red">X</text><text x="1198" y="625" class="ax grn">Y</text>
      </svg>

      <form class="dialog">
        <div class="dhead">
          <svg class="dg" width="14" height="14"><use href="#gear"/></svg>
          <span>碰撞传感器</span>
          <svg class="hi" width="14" height="14" viewBox="0 0 14 14"><path d="M3 3a5.500 5.500 0 1 0 5-1.500M3 .5V4h3.500" fill="none" stroke="#fff" stroke-width="1.600"/></svg>
          <b class="hq">?</b>
          <svg class="hx" width="12" height="12" viewBox="0 0 12 12"><path d="M1 1l10 10M11 1L1 11" stroke="#fff" stroke-width="1.800"/></svg>
        </div>
        <div class="sec"><h3><i class="dn"></i>类型</h3>
          <div class="dd"><span>触发</span><i class="tri"></i></div></div>
        <div class="sec"><h3><i class="dn"></i>碰撞传感器对象</h3>
          <div class="selrow"><div class="selmain"><svg width="16" height="14" viewBox="0 0 16 14"><path d="M1 8l4 5L15 1" fill="none" stroke="#28c83c" stroke-width="1.800"/></svg><span>选择对象 (1)</span></div>
          <div class="selbtn"><svg width="18" height="18" viewBox="0 0 18 18"><circle cx="9" cy="9" r="6" fill="none" stroke="#333"/><path d="M9 0v18M0 9h18" stroke="#333"/></svg></div></div></div>
        <div class="sec"><h3><i class="dn"></i>形状</h3>
          <div class="frow"><label>碰撞形状</label><div class="dd w141"><span>方块</span><i class="tri"></i></div></div>
          <div class="frow m2"><label>形状属性</label><div class="dd w108"><span>自动</span><i class="tri"></i></div></div>
          <div class="frow m5 h26"><div class="spec"><svg width="16" height="14" viewBox="0 0 16 14"><path d="M1 8l4 5L15 1" fill="none" stroke="#a0c4a8" stroke-width="1.800"/></svg><span>指定坐标系</span></div>
            <div class="csys"><div class="cs1"><svg width="20" height="20" viewBox="0 0 20 20"><path d="M11 3v11M11 14l7-3M11 14L4 11" stroke="#668" fill="none"/><path d="M3 12c2 5 5 4 7 4" stroke="#b0a090" stroke-width="3" fill="none"/><path d="M13 17h1M15 17h1M17 17h1" stroke="#666"/></svg></div><div class="cs2"><svg width="26" height="24" viewBox="0 0 26 24"><path d="M7 14V4M7 14l12-6" fill="none" stroke="#9c9"/><path d="M7 14l13 7" stroke="#d9a" fill="none"/><text x="9" y="7" class="tiny">Z</text><text x="20" y="9" class="tiny">Y</text><text x="21" y="23" class="tiny">X</text></svg></div><div class="cs3"><i class="caret g"></i></div></div></div>
          <div class="frow m5"><label class="off">长度</label><div class="num"><span class="nv">40.0000000000001</span><span class="unit">mm<i class="caret g"></i></span><i class="caret g nc"></i></div></div>
          <div class="frow m2"><label class="off">宽度</label><div class="num"><span class="nv">20</span><span class="unit">mm<i class="caret g"></i></span><i class="caret g nc"></i></div></div>
          <div class="frow m2"><label class="off">高度</label><div class="num"><span class="nv">20</span><span class="unit">mm<i class="caret g"></i></span><i class="caret g nc"></i></div></div>
        </div>
        <div class="sec"><h3><i class="dn"></i>类别</h3>
          <div class="frow"><label>类别</label><div class="catin">0</div></div></div>
        <div class="sec"><h3><i class="dn"></i>碰撞时高亮显示</h3>
          <div class="cbrow"><i class="cb"><svg width="11" height="11" viewBox="0 0 11 11"><path d="M1 5.500l3 3.500 6-8" fill="none" stroke="#444" stroke-width="1.100"/></svg></i><span>碰撞时高亮显示</span></div></div>
        <div class="sec"><h3><i class="dn"></i>检测类型</h3>
          <div class="radios"><i class="rd on"></i><span>系统</span><i class="rd"></i><span>用户</span><i class="rd"></i><span>两者</span></div></div>
        <div class="sec"><h3><i class="dn"></i>名称</h3>
          <div class="namein"><span>CollisionSensor(1)</span></div></div>
        <div class="collapse"><i></i></div>
        <div class="dfoot"><button type="button" class="btn pri">确定</button><button type="button" class="btn">应用</button><button type="button" class="btn">取消</button></div>
      </form>

      <svg class="arrow" width="1143" height="726" viewBox="337 202 1143 726">
        <polygon points="510,358 1153,510 1150,506 1168,520 1148,524 1150,519" fill="#f83a3a"/>
      </svg>
      <div class="wm">UG爱好者论坛@伤口上撒盐</div>
    </div>
  </div>
</main>
</body>
</html>
```

FILE: styles.css
```css
* { box-sizing: border-box; }
html, body { margin: 0; padding: 0; }
body {
  width: 1480px; height: 928px; overflow: hidden; background: #fff; color: #222;
  font: 12px/1.2 "Noto Sans CJK SC", "Noto Sans", sans-serif;
  display: flex; flex-direction: column;
}
i { display: block; font-style: normal; }
svg { display: block; flex: none; }
.defs { position: absolute; }

.caret { width: 0; height: 0; flex: none; border-left: 3px solid transparent; border-right: 3px solid transparent; border-top: 3px solid #222; }
.caret.w { border-top-color: #fff; }
.caret.g { border-top-color: #aaa; }
.tri { width: 0; height: 0; flex: none; border-left: 5px solid transparent; border-right: 5px solid transparent; border-top: 5px solid #222; }

/* top bar */
.topbar { height: 56px; flex: none; background: linear-gradient(90deg, #005f87 0%, #066f99 100%); color: #fff; }
.quick { height: 28px; display: flex; align-items: center; }
.logo { font: 700 22px/1 "Liberation Sans", sans-serif; letter-spacing: .5px; width: 37px; margin-left: 4px; }
.qsep { width: 1px; height: 20px; background: #2d83a6; }
.ml4 { margin-left: 4px; } .ml5 { margin-left: 5px; } .ml6 { margin-left: 6px; } .ml7 { margin-left: 7px; } .ml8 { margin-left: 8px; } .ml10 { margin-left: 10px; }
.q.dim { opacity: .28; }
.qtext { font-size: 11px; }
.qmenu { width: 6px; height: 5px; border-top: 1px solid #fff; position: relative; }
.qmenu::after { content: ""; position: absolute; left: 0; top: 2px; border-left: 3px solid transparent; border-right: 3px solid transparent; border-top: 3px solid #fff; }
.apptitle { margin-left: 618px; margin-top: -2px; font-size: 12px; word-spacing: 2px; letter-spacing: .2px; }
.tabs { height: 28px; display: flex; font-size: 13px; }
.tab { min-width: 58px; padding: 0 16px; line-height: 24px; text-align: center; color: #f4f8fa; white-space: nowrap; }
.tab.file { min-width: 0; width: 58px; padding: 0; margin: 0 17px 0 11px; }
.tab.on { color: #ffc83c; border-bottom: 2px solid #ffc83c; height: 26px; }
.tab.pmi { font-size: 13.500px; padding: 0; }

/* ribbon */
.ribbon { height: 94px; flex: none; display: flex; overflow: hidden; border-bottom: 1px solid #e2e2e2; font-size: 11px; }
.group { flex: none; display: flex; flex-direction: column; background: linear-gradient(#ddd, #ddd) right 5px / 1px 84px no-repeat; }
.g1 { width: 129px; } .g2 { width: 121px; } .g3 { width: 323px; } .g4 { width: 256px; } .g5 { width: 174px; } .g6 { width: 222px; } .g7 { width: 272px; background: none; }
.items { height: 76px; display: grid; grid-auto-flow: column; }
.g1 .items { grid-template-columns: 50px 76px; padding-left: 3px; }
.g2 .items { grid-template-columns: 50px 68px; padding-left: 3px; }
.g3 .items { grid-template-columns: 40px 40px 28px 22px 36px 22px 66px 60px; padding-left: 8px; }
.g4 .items { grid-template-columns: 66px 28px 52px 52px 68px; }
.g5 .items { grid-template-columns: 78px 38px 54px; }
.g6 .items { grid-template-columns: 66px 40px 72px 28px; }
.g7 .items { grid-template-columns: 68px 58px 90px 58px; }
.big { display: flex; flex-direction: column; align-items: center; padding-top: 5px; white-space: nowrap; min-width: 0; }
.big svg { height: 36px; margin-bottom: 1px; }
.big span { line-height: 14px; }
.big .caret { margin-top: 6px; }
.big.off span { color: #bbb; }
.big.edge span { margin-right: 22px; }
.col { display: flex; flex-direction: column; justify-content: space-between; padding: 4px 0 2px; height: 72px; align-items: center; }
.g1 .col, .g2 .col { align-items: flex-start; height: 71px; padding: 3px 0 2px; }
.col.wide { padding: 7px 0 0; justify-content: flex-start; gap: 10px; }
.sm { display: flex; align-items: center; gap: 3px; white-space: nowrap; height: 20px; }
.sm span { margin-left: 1px; margin-top: -1px; }
.sm .caret { margin-left: 1px; }
.sm .caret.sp { margin-left: 7px; }
.sm .caret.sp2 { margin-left: 13px; }
.col2 { display: flex; flex-direction: column; padding: 6px 0 0 6px; gap: 8px; }
.sm2 { display: flex; align-items: center; gap: 5px; height: 28px; white-space: nowrap; }
.sm2 span { margin-top: -1px; }
.col2 + .col2 { padding-left: 0; }
.col2 + .col2 .sm2 { gap: 6px; }
.glabel { position: relative; display: flex; align-items: center; padding-right: 18px; height: 15px; }
.glabel span { flex: 1; text-align: center; color: #1a7ca0; }
.glabel .caret { position: absolute; right: 7px; top: 7px; }
.g7 .glabel { padding-right: 0; }

/* selection bar */
.selbar { height: 28px; flex: none; display: flex; align-items: center; border-bottom: 1px solid #bdbdbd; padding-left: 13px; background: #fff; }
.menu { margin-left: 7px; margin-right: 1px; font-size: 11.500px; white-space: nowrap; }
.bsep { width: 1px; height: 19px; background: #ddd; margin: 0 12px 0 8px; }
.combo { height: 22px; border: 1px solid #555; display: flex; align-items: center; justify-content: space-between; padding: 0 4px 0 3px; font-size: 12px; }
.combo .tri { border-left-width: 4px; border-right-width: 4px; }
.c1 { width: 149px; }
.c2 { width: 155px; }
.filter { margin: 0 8px 0 9px; }
.tool { margin-left: 9px; }
.selbar .caret { margin-left: 4px; }
.selbar .caret.c7 { margin-left: 7px; }
.t2 { margin-left: 11px; }
.t3 { margin-left: 8px; }
.t6 { margin-left: 10px; }
.bsep.last { margin-left: 11px; }

/* main */
.main { flex: 1; display: flex; min-height: 0; }
.rail { width: 33px; flex: none; background: #dcdcdc; border-right: 1px solid #a8a8a8; padding-left: 2px; }
.ri { height: 42px; display: flex; align-items: center; justify-content: center; margin-left: -2px; padding-right: 1px; }
.ri.top { height: 26px; }
.ri.s1 { margin-top: 16px; }
.ri.act { background: #fff; height: 43px; margin-left: 0; margin-right: -1px; border: 1px solid #c8c8c8; border-right: 0; }
.ri.h40 { height: 40px; } .ri.h41 { height: 41px; } .ri.h43 { height: 43px; } .ri.h44 { height: 44px; }
.ri.g15 { margin-top: 15px; }
.ri.g10 { margin-top: 10px; }
.ri.g11 { margin-top: 11px; }
.dk { color: #333; }
.pbox { width: 24px; height: 24px; border: 1px solid #555; font: 9.500px/11px "Liberation Sans", sans-serif; color: #444; text-align: center; }

.navpanel { width: 304px; flex: none; padding-left: 5px; border-right: 1px solid #d0d0d0; }
.navhead { height: 28px; display: flex; align-items: center; justify-content: space-between; padding: 0 17px 0 4px; font-size: 12px; }
.maxbox { width: 12px; height: 11px; border: 1px solid #222; border-top-width: 2px; }
.frame { width: 289px; height: 722px; border: 1px solid #ddd; border-bottom: 0; padding: 1px 2px 0 1px; }
.thead { height: 21px; display: grid; grid-template-columns: 240px 40px 1fr; background: #efefef; line-height: 20px; border-bottom: 1px solid #e0e0e0; }
.th1 { padding-left: 5px; border-right: 1px solid #ccc; }
.th2 { padding-left: 6px; border-right: 1px solid #ccc; }
.tree {
  position: relative; height: 700px;
  background:
    linear-gradient(#e8e8e8, #e8e8e8) 239px 0 / 1px 100% no-repeat,
    linear-gradient(#e8e8e8, #e8e8e8) 279px 0 / 1px 100% no-repeat,
    repeating-linear-gradient(#fff 0 19px, #e8e8e8 19px 20px, #f9f9f9 20px 39px, #e8e8e8 39px 40px);
}
.lines { position: absolute; left: 0; top: 0; }
.row { height: 20px; display: grid; grid-template-columns: 240px 40px 1fr; align-items: center; position: relative; }
.cell { display: flex; align-items: center; height: 20px; padding-left: 5px; white-space: nowrap; }
.cell span { margin-top: -2px; }
.cell .lat { letter-spacing: .2px; }
.cell.noexp { padding-left: 19px; }
.cell.l2 { padding-left: 39px; }
.cell.l2p { padding-left: 24px; }
.exp { width: 9px; height: 9px; border: 1px solid #aaa; background: #fff; position: relative; margin-right: 5px; flex: none; }
.exp::before { content: ""; position: absolute; left: 1px; top: 3px; width: 5px; height: 1px; background: #222; }
.exp.plus::after { content: ""; position: absolute; left: 3px; top: 1px; width: 1px; height: 5px; background: #222; }
.l2p .exp { margin-right: 6px; }
.fo { margin-right: 3px; }
.oi { margin: 0 3px 0 0; }
.c2 { padding-left: 4px; }
.c3 { padding-left: 5px; }
.tick { width: 2px; height: 11px; background: #fbd08a; }
.tick.t { height: 8px; }
.tick.d { height: 2px; }

/* workspace */
.work { flex: 1; min-width: 0; display: flex; flex-direction: column; background: #fff; }
.doctabs { height: 24px; flex: none; display: flex; }
.doctab { width: 133px; background: #005f87; color: #fff; display: flex; align-items: center; padding: 0 0 2px 8px; font: 12.600px "Noto Sans", sans-serif; white-space: nowrap; }
.doctab .gr { color: #ddd; margin-right: 5px; }
.doctab span { width: 76px; }
.dclose { font-weight: 700; color: #d8d8d8; font-size: 16px; margin-left: 5px; line-height: 1; }
.canvas { flex: 1; position: relative; overflow: hidden; }
.model { position: absolute; left: 0; top: 0; }
.arrow { position: absolute; left: 0; top: 0; pointer-events: none; }
.ax { font: 12px "Liberation Sans", sans-serif; }
.gry { fill: #e8e8e8; font-size: 13px; } .blu { fill: #2a4ae8; } .red { fill: #c84a3a; } .grn { fill: #5cb060; }
.mini { font: 7px "Liberation Sans", sans-serif; text-anchor: middle; }
.tiny { font: 8px "Liberation Sans", sans-serif; fill: #888; }
.wm { position: absolute; right: 3px; bottom: 3px; font: 15px "Liberation Mono", "Noto Sans CJK SC", monospace; letter-spacing: .7px; color: #666; }

/* dialog */
.dialog { position: absolute; left: 0; top: 0; width: 328px; height: 704px; background: #f0f0f0; border-left: 1px solid #c8c8c8; border-bottom: 1px solid #ccc; border-right: 1px solid #e8e8e8; display: flex; flex-direction: column; padding: 0 5px; }
.dhead { height: 26px; margin: 0 -6px 4px; flex: none; background: #005f87; color: #fff; display: flex; align-items: center; padding-left: 7px; font-size: 14px; }
.dg { margin-right: 8px; }
.dhead span { width: 234px; }
.hi { margin-right: 7px; }
.hq { font: 700 15px "Liberation Sans", sans-serif; width: 17px; }
.hx { margin-left: 3px; }
.sec { background: #fff; padding: 1px 9px 8px; border-bottom: 1px solid #c8c8c8; margin-bottom: 3px; flex: none; }
.sec h3 { height: 24px; margin: 0 0 5px; padding-bottom: 2px; font-weight: 400; font-size: 14px; color: #1a6e90; display: flex; align-items: center; }
.dn { width: 0; height: 0; border-left: 4px solid transparent; border-right: 4px solid transparent; border-top: 5px solid #005f87; margin: 0 9px 0 -2px; }
.dd { height: 25px; border: 1px solid #555; display: flex; align-items: center; justify-content: space-between; padding: 0 8px 0 4px; background: #fff; }
.dd .tri { border-left-width: 4px; border-right-width: 4px; }
.w141 { width: 141px; padding-left: 4px; } .w108 { width: 108px; padding-left: 4px; }
.selrow { display: flex; height: 32px; gap: 2px; }
.selmain { flex: 1; background: #ffdd73; display: flex; align-items: center; gap: 4px; padding-left: 0; }
.selbtn { width: 32px; background: #ffdd73; display: flex; align-items: center; justify-content: center; }
.frow { display: flex; align-items: center; justify-content: space-between; }
.frow label { font-size: 12px; }
.frow label.off { color: #aaa; }
.m2 { margin-top: 2px; } .m5 { margin-top: 5px; } .h26 { height: 26px; }
.spec { display: flex; align-items: center; gap: 4px; color: #aaa; }
.csys { display: flex; align-items: center; }
.cs1 { width: 24px; height: 24px; border: 1px solid #ccc; background: #f6f6f6; margin-right: 2px; display: flex; align-items: center; justify-content: center; }
.cs2 { width: 32px; height: 32px; margin: -3px 0; border: 1px solid #ccc; display: flex; align-items: center; justify-content: center; }
.cs3 { width: 17px; height: 32px; margin: -3px 0; border: 1px solid #ddd; border-left: 0; display: flex; align-items: center; justify-content: center; }
.num { height: 25px; width: 243px; border: 1px solid #bbb; background: #f4f4f4; display: flex; align-items: center; color: #888; font: 12.300px "Noto Sans", sans-serif; }
.nv { flex: 1; padding-left: 4px; }
.unit { width: 39px; height: 23px; background: #fafafa; color: #aaa; display: flex; align-items: center; gap: 6px; padding-left: 4px; margin-right: 6px; font-size: 12.500px; }
.nc { margin-right: 5px; }
.catin { width: 82px; height: 23px; border: 1px solid #777; text-align: right; padding-right: 5px; font: 14px/21px "Noto Sans", sans-serif; font-weight: 300; }
.cbrow { display: flex; align-items: center; height: 21px; gap: 5px; }
.cb { width: 13px; height: 13px; border: 1px solid #333; }
.radios { height: 32px; background: #eee; border: 1px solid #ddd; display: flex; align-items: center; padding-left: 4px; }
.rd { width: 13px; height: 13px; border: 1px solid #444; border-radius: 50%; background: #fff; margin-right: 4px; position: relative; }
.rd.on::after { content: ""; position: absolute; left: 2px; top: 2px; width: 7px; height: 7px; border-radius: 50%; background: #333; }
.radios span { width: 39px; }
.namein { height: 23px; border: 1px solid #777; padding-left: 4px; display: flex; align-items: center; font: 12.500px "Noto Sans", sans-serif; }
.namein span { background: #0078d7; color: #fff; line-height: 17px; }
.collapse { height: 17px; margin-top: -3px; border-bottom: 1px solid #ccc; display: flex; align-items: flex-end; padding-bottom: 4px; justify-content: center; flex: none; }
.collapse i { border-left: 5px solid transparent; border-right: 5px solid transparent; border-bottom: 5px solid #222; }
.dfoot { flex: 1; display: flex; justify-content: flex-end; gap: 5px; padding: 8px 10px 0 0; }
.btn { width: 54px; height: 25px; background: #fff; border: 1px solid #00628a; color: #00628a; font: 12px "Noto Sans CJK SC", sans-serif; padding: 0; }
.btn.pri { background: #005f87; color: #fff; }
```
